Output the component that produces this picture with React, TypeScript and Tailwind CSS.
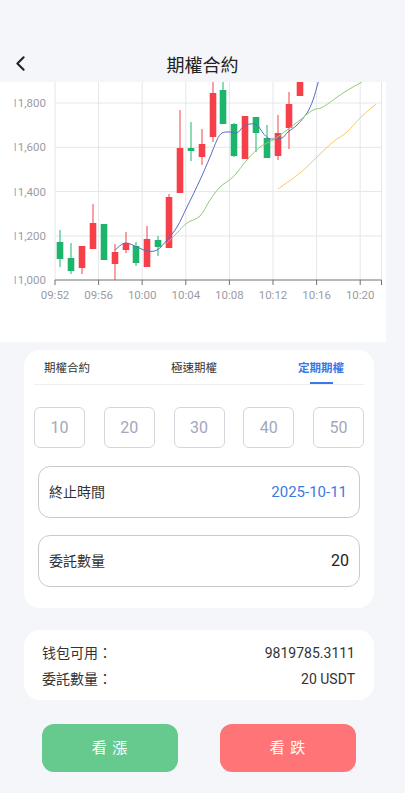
import React from "react";
import { ChevronLeft } from "lucide-react";

type C = [number, number, number, number, number, "r" | "g"];

const candles: C[] = [
  [60, 242, 259, 230, 267, "g"],
  [71, 258, 271, 243, 274, "g"],
  [82, 246, 268, 246, 274, "r"],
  [93, 223, 249, 204, 249, "r"],
  [104, 224, 260, 224, 260, "g"],
  [115, 252, 264, 244, 280, "r"],
  [126, 243, 250, 232, 253, "r"],
  [136, 246, 263, 242, 266, "g"],
  [147, 239, 267, 226, 267, "r"],
  [158, 240, 247, 236, 256, "g"],
  [169, 197, 248, 194, 248, "r"],
  [180, 148, 193, 110, 193, "r"],
  [191, 148, 151, 122, 161, "g"],
  [202, 144, 157, 129, 165, "r"],
  [213, 93, 137, 70, 142, "r"],
  [223, 90, 124, 70, 124, "g"],
  [234, 124, 156, 123, 157, "g"],
  [245, 116, 159, 116, 159, "r"],
  [256, 117, 133, 117, 152, "g"],
  [267, 138, 158, 125, 158, "g"],
  [278, 133, 156, 115, 160, "r"],
  [289, 104, 128, 92, 149, "r"],
  [300, 70, 96, 70, 96, "r"],
];

const blue: [number, number][] = [
  [115, 250], [125, 243], [137, 247], [147, 251], [157, 250], [167, 240], [177, 227],
  [187, 207], [200, 180], [210, 157], [217, 140], [222, 133], [230, 132], [237, 133],
  [243, 127], [250, 124], [257, 125], [263, 133], [268, 138], [273, 139], [282, 138],
  [288, 132], [297, 125], [307, 113], [313, 100], [318, 83], [321, 74],
];
const green: [number, number][] = [
  [167, 243], [177, 233], [187, 223], [200, 216], [210, 200], [220, 187], [233, 177],
  [247, 160], [260, 147], [273, 140], [287, 130], [300, 120], [313, 110], [323, 107],
  [343, 93], [360, 83], [368, 78],
];
const orange: [number, number][] = [
  [278, 189], [300, 173], [317, 157], [333, 142], [347, 132], [360, 118], [376, 104],
];

function smooth(pts: [number, number][]) {
  let d = `M${pts[0][0]},${pts[0][1]}`;
  for (let i = 0; i < pts.length - 1; i++) {
    const p0 = pts[i - 1] || pts[i];
    const p1 = pts[i];
    const p2 = pts[i + 1];
    const p3 = pts[i + 2] || p2;
    const c1x = p1[0] + (p2[0] - p0[0]) / 6;
    const c1y = p1[1] + (p2[1] - p0[1]) / 6;
    const c2x = p2[0] - (p3[0] - p1[0]) / 6;
    const c2y = p2[1] - (p3[1] - p1[1]) / 6;
    d += ` C${c1x},${c1y} ${c2x},${c2y} ${p2[0]},${p2[1]}`;
  }
  return d;
}

const xTicks: [number, string][] = [
  [55, "09:52"], [98.6, "09:56"], [142.2, "10:00"], [185.8, "10:04"],
  [229.4, "10:08"], [273, "10:12"], [316.6, "10:16"], [360.2, "10:20"],
];
const yTicks: [number, string][] = [
  [103, "11,800"], [147.3, "11,600"], [191.6, "11,400"], [235.9, "11,200"], [280, "11,000"],
];

function Chart() {
  return (
    <div className="w-[386px] h-[260px] bg-white">
      <svg width="386" height="260" viewBox="0 82 386 260" className="block">
        <defs>
          <clipPath id="lbl">
            <rect x="14.5" y="82" width="50" height="260" />
          </clipPath>
        </defs>
        {xTicks.map(([x]) => (
          <line key={"v" + x} x1={x} x2={x} y1={82} y2={280} stroke="#e4e6ea" strokeWidth="1" />
        ))}
        <line x1={381.5} x2={381.5} y1={82} y2={280} stroke="#e4e6ea" strokeWidth="1" />
        {yTicks.slice(0, 4).map(([y]) => (
          <line key={"h" + y} x1={55} x2={381.5} y1={y} y2={y} stroke="#e4e6ea" strokeWidth="1" />
        ))}
        <g clipPath="url(#lbl)">
          {yTicks.map(([y, t]) => (
            <text
              key={t}
              x={46}
              y={y + 4}
              textAnchor="end"
              fontSize="11.5"
              fill="#9a9ca3"
              fontFamily="Roboto, 'Noto Sans', sans-serif"
            >
              {t}
            </text>
          ))}
        </g>
        {candles.map(([cx, bt, bb, wt, wb, c], i) => {
          const col = c === "r" ? "#f5404a" : "#1db46c";
          return (
            <g key={i}>
              <line x1={cx} x2={cx} y1={wt} y2={wb} stroke={col} strokeWidth="1" />
              <rect x={cx - 3.3} y={bt} width={6.6} height={Math.max(bb - bt, 1.5)} fill={col} />
            </g>
          );
        })}
        <path d={smooth(blue)} fill="none" stroke="#5a6cc2" strokeWidth="1" />
        <path d={smooth(green)} fill="none" stroke="#91cc75" strokeWidth="1" />
        <path d={smooth(orange)} fill="none" stroke="#f7c862" strokeWidth="1" />
        <line x1={55} x2={381.5} y1={280} y2={280} stroke="#6e7079" strokeWidth="1" />
        {xTicks.map(([x, t]) => (
          <g key={t}>
            <line x1={x} x2={x} y1={280} y2={285} stroke="#6e7079" strokeWidth="1" />
            <text
              x={x}
              y={298.5}
              textAnchor="middle"
              fontSize="11.5"
              fill="#9a9ca3"
              fontFamily="Roboto, 'Noto Sans', sans-serif"
            >
              {t}
            </text>
          </g>
        ))}
        <line x1={381.5} x2={381.5} y1={280} y2={285} stroke="#6e7079" strokeWidth="1" />
      </svg>
    </div>
  );
}

export default function App() {
  const font = { fontFamily: "Roboto, 'Noto Sans CJK TC', 'Noto Sans', sans-serif" };
  return (
    <div className="w-[405px] min-h-[793px] bg-[#f5f6fa] text-[#333]" style={font}>
      <div className="relative h-[82px] flex items-end justify-center pb-[3px]">
        <ChevronLeft className="absolute left-[8px] bottom-[6px] text-[#222]" size={25} strokeWidth={2} />
        <div className="text-[18px] leading-[26px] text-[#222] font-normal">期權合約</div>
      </div>
      <Chart />
      <div className="mx-[24px] mt-[8px] w-[350px] rounded-[16px] bg-white px-[10px] pb-[21px]">
        <div className="flex justify-between pl-[10px] pr-[20px] border-b border-[#eeeff2]">
          <div className="flex flex-col items-center pt-[10px]">
            <div className="text-[11.5px] leading-[16px] text-[#333]">期權合約</div>
            <div className="h-[2px] w-[23px] mt-[6px] bg-transparent" />
          </div>
          <div className="flex flex-col items-center pt-[10px]">
            <div className="text-[11.5px] leading-[16px] text-[#333]">極速期權</div>
            <div className="h-[2px] w-[23px] mt-[6px] bg-transparent" />
          </div>
          <div className="flex flex-col items-center pt-[10px]">
            <div className="text-[11.5px] leading-[16px] text-[#3a78e6] font-semibold">定期期權</div>
            <div className="h-[2px] w-[23px] mt-[6px] bg-[#3a78e6]" />
          </div>
        </div>
        <div className="mt-[22px] flex justify-between">
          {["10", "20", "30", "40", "50"].map((v) => (
            <div
              key={v}
              className="w-[51px] h-[41px] rounded-[6px] border border-[#d5d6dd] flex items-center justify-center text-[16px] text-[#a3a7bb]"
            >
              {v}
            </div>
          ))}
        </div>
        <div className="mx-[4px] mt-[18px] h-[52px] rounded-[12px] border border-[#cacaca] flex items-center justify-between pl-[10px] pr-[12px]">
          <span className="text-[14px] text-[#333]">終止時間</span>
          <span className="text-[15px] text-[#3b7ae0]">2025-10-11</span>
        </div>
        <div className="mx-[4px] mt-[17px] h-[52px] rounded-[12px] border border-[#cacaca] flex items-center justify-between pl-[10px] pr-[10px]">
          <span className="text-[14px] text-[#333]">委託數量</span>
          <span className="text-[16px] text-[#222]">20</span>
        </div>
      </div>
      <div className="mx-[24px] mt-[22px] w-[350px] h-[70px] rounded-[16px] bg-white pl-[18px] pr-[19px] pt-[10px]">
        <div className="flex justify-between text-[14px] leading-[26px] text-[#333]">
          <span>钱包可用：</span>
          <span>9819785.3111</span>
        </div>
        <div className="flex justify-between text-[14px] leading-[26px] text-[#333]">
          <span>委託數量：</span>
          <span>20 USDT</span>
        </div>
      </div>
      <div className="mx-[42px] mt-[24px] w-[314px] flex justify-between">
        <div className="w-[136px] h-[48px] rounded-[12px] bg-[#66c98e] flex items-center justify-center text-white text-[15px] tracking-[1px]">
          看 漲
        </div>
        <div className="w-[136px] h-[48px] rounded-[12px] bg-[#ff7577] flex items-center justify-center text-white text-[15px] tracking-[1px]">
          看 跌
        </div>
      </div>
    </div>
  );
}
